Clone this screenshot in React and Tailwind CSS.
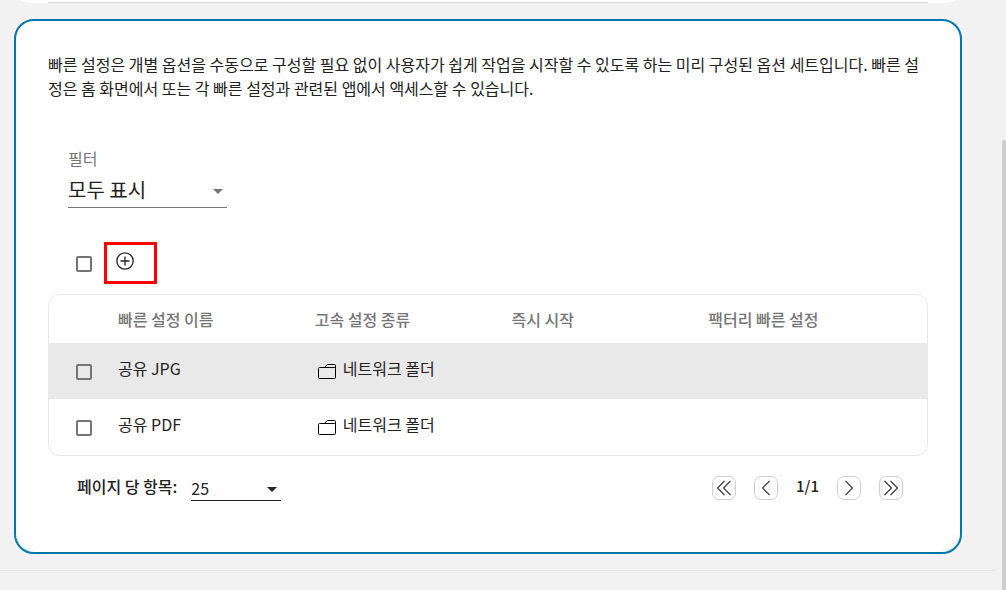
import { useState } from 'react'

const presets = [
  { id: 'jpg', name: '공유 JPG', type: '네트워크 폴더' },
  { id: 'pdf', name: '공유 PDF', type: '네트워크 폴더' },
]

const checkboxClass =
  'mt-0.5 block size-4 shrink-0 appearance-none rounded-[2px] border-2 border-[#757575] checked:bg-[#0076ad]'

function CaretDown({ className }) {
  return (
    <svg viewBox="0 0 10 5" className={`pointer-events-none absolute h-[5px] w-[10px] ${className}`} aria-hidden="true">
      <path d="M0 0h10L5 5z" fill="currentColor" />
    </svg>
  )
}

function FolderIcon() {
  return (
    <svg width="18" height="15" viewBox="0 0 18 15" fill="none" stroke="#000" aria-hidden="true">
      <path d="M1.5 3.5h15a1 1 0 0 1 1 1v9a1 1 0 0 1-1 1h-15a1 1 0 0 1-1-1v-9a1 1 0 0 1 1-1z" />
      <path d="M6.5 3.5 8.6 1.1Q9 .5 9.8.5h6.7a1 1 0 0 1 1 1v3" />
    </svg>
  )
}

function PageButton({ label, d }) {
  return (
    <button type="button" aria-label={label} className="flex size-6 items-center justify-center rounded-[7px] border border-[#cfcfcf]">
      <svg width="16" height="16" viewBox="0 0 16 16" fill="none" stroke="#333" strokeWidth="1.1" className="shrink-0" aria-hidden="true">
        <path d={d} />
      </svg>
    </button>
  )
}

export default function App() {
  const [filter, setFilter] = useState('all')
  const [pageSize, setPageSize] = useState('25')

  return (
    <div className="flex min-h-screen bg-[#f2f2f2] font-['Noto_Sans_CJK_KR','Noto_Sans_CJK_SC',sans-serif] text-base text-[#212121]">
      <div className="flex min-w-0 flex-1 flex-col">
        {/* previous section */}
        <div className="mr-10 ml-3.5 h-[3px] overflow-hidden">
          <div className="-mt-[29px] h-8 rounded-[20px] bg-white px-[34px]">
            <div className="h-full border-b border-[#dcdcdc]" />
          </div>
        </div>

        <main className="mt-4 mr-10 ml-3.5 rounded-[20px] border-2 border-[#0076ad] bg-white px-8 pt-[31px] pb-[51px]">
          <p className="leading-6">
            빠른 설정은 개별 옵션을 수동으로 구성할 필요 없이 사용자가 쉽게 작업을 시작할 수 있도록 하는 미리 구성된 옵션 세트입니다. 빠른 설정은 홈 화면에서 또는 각 빠른 설정과 관련된 앱에서 액세스할 수 있습니다.
          </p>

          {/* filter */}
          <div className="mt-12 ml-5 flex w-[159px] flex-col">
            <label htmlFor="filter" className="leading-5 text-[#757575]">필터</label>
            <div className="relative mt-[5px] flex">
              <select
                id="filter"
                value={filter}
                onChange={e => setFilter(e.target.value)}
                className="h-[35px] w-full appearance-none border-b border-[#757575] bg-transparent text-xl leading-8"
              >
                <option value="all">모두 표시</option>
              </select>
              <CaretDown className="top-4 right-1 text-[#757575]" />
            </div>
          </div>

          {/* toolbar */}
          <div className="mt-[34px] flex items-center gap-3 pl-7">
            <input type="checkbox" aria-label="모두 선택" className={checkboxClass} />
            <div className="flex h-[42px] w-[53px] border-3 border-[#ff0000] pt-[7px] pl-[9px]">
              <button type="button" aria-label="추가" className="size-[18px]">
                <svg width="18" height="18" viewBox="0 0 18 18" fill="none" stroke="#212121" strokeWidth="1.3" aria-hidden="true">
                  <circle cx="9" cy="9" r="8.2" />
                  <path d="M9 4.5v9M4.5 9h9" />
                </svg>
              </button>
            </div>
          </div>

          {/* presets */}
          <div className="mt-2.5 overflow-hidden rounded-xl border border-[#e8e8e8]">
            <table className="w-full table-fixed text-left">
              <thead>
                <tr className="h-12 text-[#757575]">
                  <td className="w-[69px]" />
                  <th scope="col" className="font-medium">빠른 설정 이름</th>
                  <th scope="col" className="font-medium">고속 설정 종류</th>
                  <th scope="col" className="font-medium">즉시 시작</th>
                  <th scope="col" className="font-medium">팩터리 빠른 설정</th>
                  <td className="w-[22px]" />
                </tr>
              </thead>
              <tbody>
                {presets.map(p => (
                  <tr key={p.id} className="h-14 odd:bg-[#e9e9e9]">
                    <td className="pl-[27px]">
                      <input type="checkbox" aria-label={p.name} className={checkboxClass} />
                    </td>
                    <td className="pb-1.5">{p.name}</td>
                    <td>
                      <div className="flex items-center gap-[7px] pl-[3px]">
                        <FolderIcon />
                        <span className="pb-1.5">{p.type}</span>
                      </div>
                    </td>
                    <td />
                    <td />
                    <td />
                  </tr>
                ))}
              </tbody>
            </table>
          </div>

          {/* paging */}
          <div className="mt-5 flex items-start justify-between pr-[25px] pl-[29px]">
            <div className="flex items-start gap-3.5">
              <label htmlFor="page-size" className="leading-5 font-medium">페이지 당 항목:</label>
              <div className="relative flex">
                <select
                  id="page-size"
                  value={pageSize}
                  onChange={e => setPageSize(e.target.value)}
                  className="h-[25px] w-[90px] appearance-none border-b border-[#212121] bg-transparent leading-6"
                >
                  <option value="25">25</option>
                  <option value="50">50</option>
                </select>
                <CaretDown className="top-[11px] right-1" />
              </div>
            </div>
            <div className="flex items-start gap-[18px]">
              <PageButton label="처음" d="M8.5 1l-7 7 7 7M14.5 1l-7 7 7 7" />
              <PageButton label="이전" d="M11.5 1l-7 7 7 7" />
              <span className="text-[15px] leading-5 font-medium">1/1</span>
              <PageButton label="다음" d="M4.5 1l7 7-7 7" />
              <PageButton label="마지막" d="M1.5 1l7 7-7 7M7.5 1l7 7-7 7" />
            </div>
          </div>
        </main>

        <div className="mt-4 mr-1.5 border-t border-[#e6e6e6]" />
      </div>

      {/* scroll thumb */}
      <div className="mt-[140px] w-1 rounded-t-sm bg-[#cdcdcd]" />
    </div>
  )
}
